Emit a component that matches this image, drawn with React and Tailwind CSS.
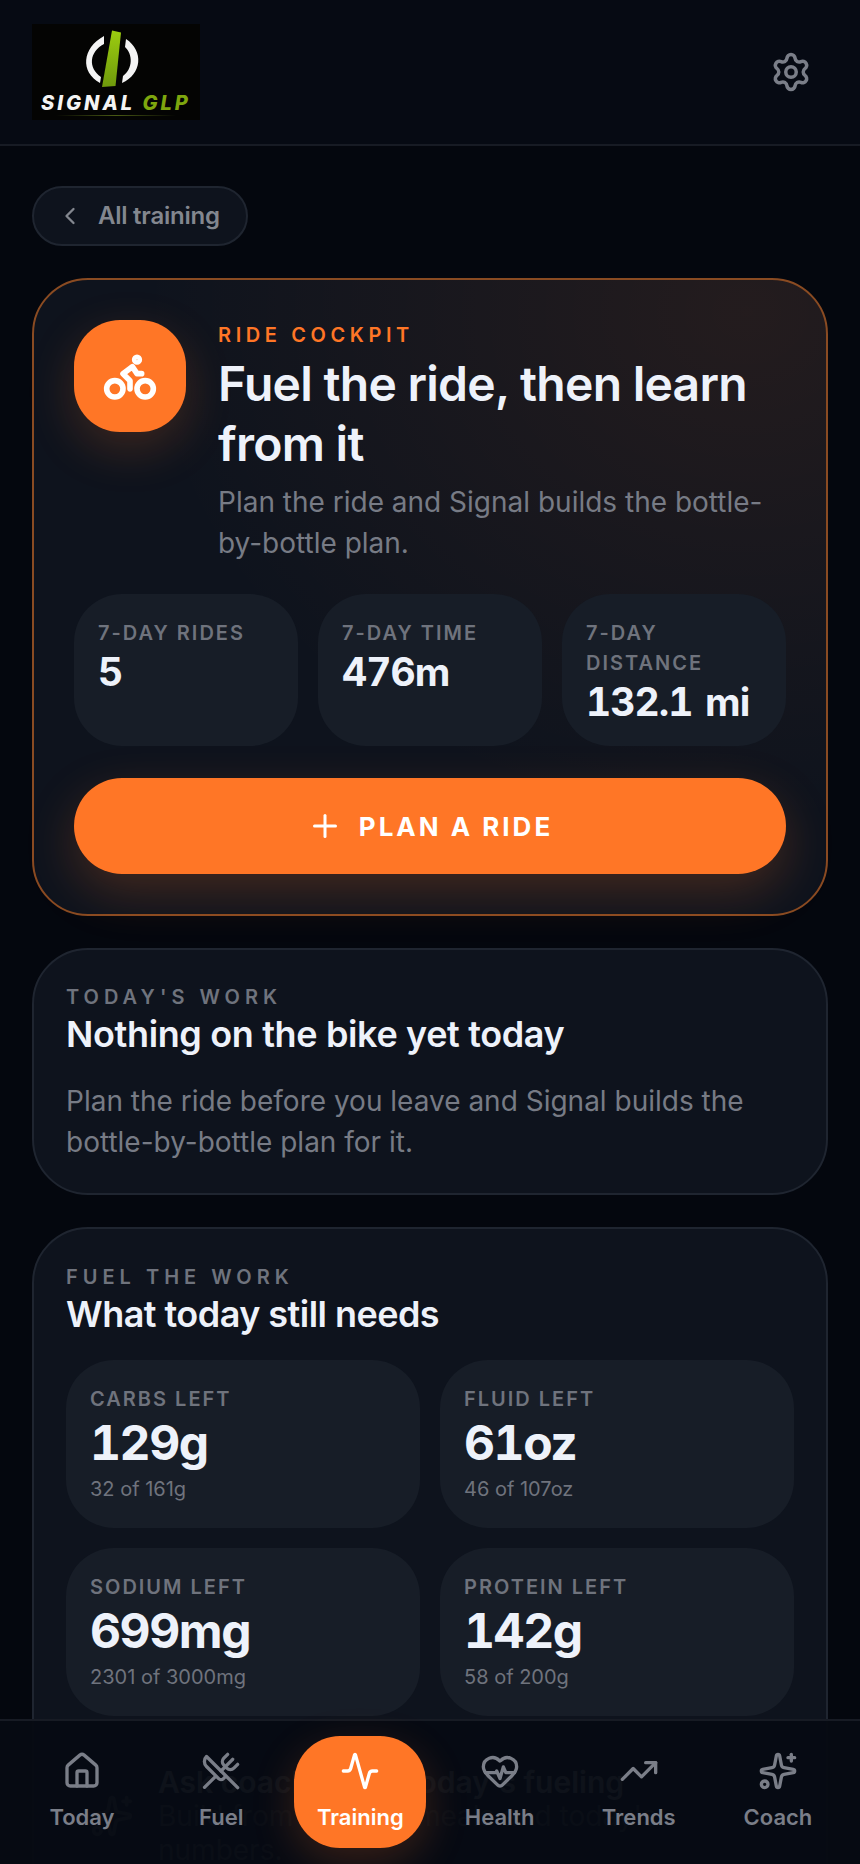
import React from "react";
import { ChevronLeft, Settings, Bike, Plus, House, UtensilsCrossed, Activity, HeartPulse, TrendingUp, Sparkles } from "lucide-react";

const navItems = [
  { label: "Today", Icon: House },
  { label: "Fuel", Icon: UtensilsCrossed },
  { label: "Training", Icon: Activity, active: true },
  { label: "Health", Icon: HeartPulse },
  { label: "Trends", Icon: TrendingUp },
  { label: "Coach", Icon: Sparkles },
];

function Logo() {
  return (
    <div className="w-[168px] h-[96px] bg-[#040403] flex flex-col items-center">
      <svg width="168" height="69" viewBox="0 0 168 69" className="shrink-0">
        <defs>
          <linearGradient id="bar" x1="0" y1="0" x2="0" y2="1">
            <stop offset="0" stopColor="#9ccc10" />
            <stop offset="1" stopColor="#6f9a0c" />
          </linearGradient>
        </defs>
        <path d="M80 6.5 L89 8.5 L83.5 62 L70 63 Z" fill="url(#bar)" />
        <path d="M72 12 C50 24 48 48 68 59 L69 53 C56 44 57 28 72 20 Z" fill="#f4f4f4" />
        <path d="M94 15 L93 23 C101 30 101 45 91 52 L90 59 C110 50 112 27 94 15 Z" fill="#f4f4f4" />
      </svg>
      <div className="italic font-extrabold text-[20px] leading-[20px] tracking-[0.15em] whitespace-nowrap text-[#f4f4f4]">
        SIGNAL <span className="text-[#7ea60e]">GLP</span>
      </div>
      <div className="w-[120px] h-px mt-[2px] bg-[linear-gradient(90deg,transparent,#4a5a14,transparent)]" />
    </div>
  );
}

function MiniStat({ label, value, sub }) {
  return (
    <div className="bg-[#171d27] rounded-[48px] p-6 h-[168px]">
      <p className="text-[20px] leading-[30px] font-semibold tracking-[0.1em] text-[#6f737d]">{label}</p>
      <p className="text-[48px] leading-[56px] font-bold tracking-[-0.03em] tabular-nums text-[#eef2fa] mt-[1px]">{value}</p>
      <p className="text-[20px] leading-[30px] text-[#6f737d] mt-[3px]">{sub}</p>
    </div>
  );
}

function RideStat({ label, value }) {
  return (
    <div className="bg-[#171d27] rounded-[48px] px-6 py-[24px] h-[152px]">
      <p className="text-[20px] leading-[30px] font-semibold tracking-[0.1em] text-[#6f737d]">{label}</p>
      <p className="text-[39px] leading-[48px] font-bold tracking-[-0.025em] tabular-nums [word-spacing:0.08em] text-[#eef2fa] whitespace-nowrap">{value}</p>
    </div>
  );
}

export default function App() {
  return (
    <div className="relative w-[860px] h-[1864px] overflow-hidden bg-[#04070e] font-[family-name:Inter,sans-serif]">
      <header className="h-[146px] border-b-2 border-[#171b24] bg-[#060a13] flex items-start justify-between pl-8 pr-[48px] pt-6">
        <Logo />
        <Settings size={42} strokeWidth={2} className="text-[#7a7e88] mt-[27px]" />
      </header>

      <main className="flex flex-col gap-8 px-8 pt-10">
        <button className="self-start h-[60px] w-[216px] rounded-full border-2 border-[#1f2530] bg-[#0e131d] flex items-center pl-[22px] gap-[14px] text-[#83878f] text-[24px] font-semibold">
          <ChevronLeft size={28} strokeWidth={2} />
          <span className="tracking-[-0.01em]">All training</span>
        </button>

        <section className="relative h-[638px] rounded-[56px] border-2 border-[#8a4b22] bg-[#0e131d] bg-[radial-gradient(ellipse_at_90%_5%,rgba(255,118,38,0.09),transparent_60%)] p-10">
          <div className="flex gap-8">
            <div className="w-[112px] h-[112px] shrink-0 rounded-[46px] bg-[#ff7626] flex items-center justify-center text-white shadow-[0_16px_48px_rgba(255,118,38,0.2)]">
              <Bike size={56} strokeWidth={2.4} />
            </div>
            <div className="min-w-0">
              <p className="text-[20px] leading-[30px] font-semibold tracking-[0.23em] text-[#ff7626]">RIDE COCKPIT</p>
              <h1 className="text-[48px] leading-[60px] font-semibold tracking-[-0.015em] text-[#eef2fa] mt-[4px]">Fuel the ride, then learn from it</h1>
              <p className="text-[28px] leading-[41px] text-[#777b85] mt-[8px]">Plan the ride and Signal builds the bottle-by-bottle plan.</p>
            </div>
          </div>
          <div className="grid grid-cols-3 gap-5 mt-[30px]">
            <RideStat label="7-DAY RIDES" value="5" />
            <RideStat label="7-DAY TIME" value="476m" />
            <RideStat label="7-DAY DISTANCE" value="132.1 mi" />
          </div>
          <button className="mt-8 w-full h-[96px] rounded-full bg-[#ff7626] flex items-center justify-center gap-[16px] text-white shadow-[0_18px_50px_rgba(255,118,38,0.22)]">
            <Plus size={36} strokeWidth={2} />
            <span className="text-[26px] font-bold tracking-[0.115em]">PLAN A RIDE</span>
          </button>
        </section>

        <section className="h-[247px] rounded-[56px] border-2 border-[#1f2530] bg-[#0e131d] px-8 pt-[32px]">
          <p className="text-[20px] leading-[30px] font-semibold tracking-[0.25em] text-[#6f737d]">TODAY'S WORK</p>
          <h2 className="text-[36px] leading-[44px] font-semibold tracking-[-0.01em] text-[#eef2fa]">Nothing on the bike yet today</h2>
          <p className="text-[28px] leading-[41px] text-[#777b85] mt-[25px]">Plan the ride before you leave and Signal builds the bottle-by-bottle plan for it.</p>
        </section>

        <section className="rounded-[56px] border-2 border-[#1f2530] bg-[#0e131d] px-8 pt-[33px] h-[700px]">
          <p className="text-[20px] leading-[30px] font-semibold tracking-[0.25em] text-[#6f737d]">FUEL THE WORK</p>
          <h2 className="text-[36px] leading-[44px] font-semibold tracking-[-0.015em] text-[#eef2fa]">What today still needs</h2>
          <div className="grid grid-cols-2 gap-5 mt-[24px]">
            <MiniStat label="CARBS LEFT" value="129g" sub="32 of 161g" />
            <MiniStat label="FLUID LEFT" value="61oz" sub="46 of 107oz" />
            <MiniStat label="SODIUM LEFT" value="699mg" sub="2301 of 3000mg" />
            <MiniStat label="PROTEIN LEFT" value="142g" sub="58 of 200g" />
          </div>
          <div className="flex items-center gap-6 mt-[49px] pl-[24px]">
            <Sparkles size={44} className="text-[#777b85] shrink-0" />
            <div>
              <p className="text-[30px] leading-[34px] font-semibold text-[#eef2fa]">Ask coach about today's fueling</p>
              <p className="text-[28px] leading-[34px] text-[#777b85] w-[540px]">Build from my ride, meals and today's numbers.</p>
            </div>
          </div>
        </section>
      </main>

      <nav className="absolute left-0 right-0 bottom-0 h-[145px] border-t-2 border-[#171b24] bg-[#060a13]/[0.97] flex items-start justify-between px-[16px] pt-[15px]">
        {navItems.map(({ label, Icon, active }) => (
          <div
            key={label}
            className={
              "w-[132px] h-[112px] rounded-[46px] flex flex-col items-center pt-[15px]" +
              (active ? " bg-[#ff7626] text-white shadow-[0_14px_44px_rgba(255,118,38,0.2)]" : " text-[#7a7e88]")
            }
          >
            <Icon size={40} strokeWidth={2} />
            <span className="text-[22px] leading-[30px] font-semibold mt-[11px]">{label}</span>
          </div>
        ))}
      </nav>
    </div>
  );
}
